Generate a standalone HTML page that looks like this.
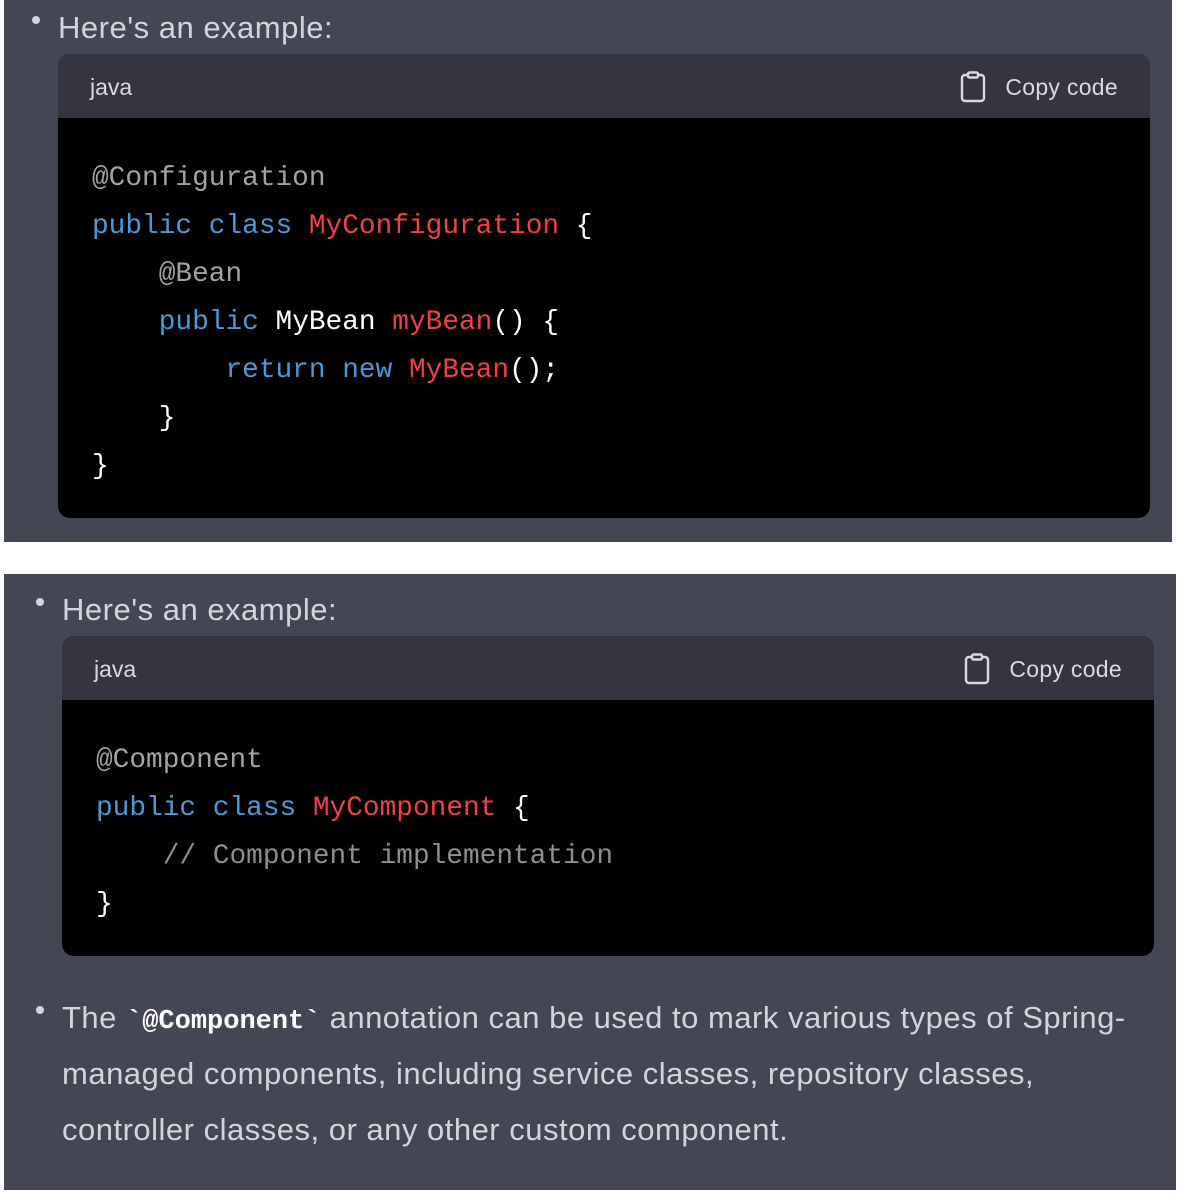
<!DOCTYPE html>
<html><head><meta charset="utf-8"><style>
*{margin:0;padding:0;box-sizing:border-box}
body{width:1188px;height:1200px;background:#fff;position:relative;overflow:hidden;font-family:"Liberation Sans",sans-serif;color:#d1d5db}
.panel{position:absolute;background:#444654}
.t{position:absolute;font-size:31px;letter-spacing:0.5px;white-space:nowrap;line-height:56px}
.dot{position:absolute;width:8px;height:8px;border-radius:50%;background:#d1d5db}
.cb{position:absolute;border-radius:12px;overflow:hidden;background:#000}
.hd{height:64px;background:#343541;position:relative;font-size:23px;color:#d9d9e3}
.hd .l{position:absolute;left:32px;top:20px}
.hd .cp{position:absolute;right:32px;top:20px;letter-spacing:0.3px}
.hd svg{position:absolute;right:164px;top:17px}
.code{font-family:"Liberation Mono",monospace;font-size:27.8px;line-height:48px;white-space:pre;color:#fff;padding:37px 0 0 34px}
.g{color:#a3a3a3}.b{color:#4b9ad8}.r{color:#ef4146}.c{color:#8e8e8e}
</style></head><body>
<div class="panel" style="left:4px;top:0;width:1168px;height:542px">
 <div class="dot" style="left:28px;top:16px"></div>
 <div class="t" style="left:54px;top:0px">Here's an example:</div>
 <div class="cb" style="left:54px;top:54px;width:1092px;height:464px">
  <div class="hd"><span class="l">java</span>
  <svg width="26" height="32" viewBox="0 0 26 32" fill="none" stroke="#d9d9e3" stroke-width="2.4" stroke-linejoin="round"><rect x="2" y="4" width="22" height="26" rx="3"/><rect x="8" y="1.5" width="10" height="5" rx="1.5" fill="#343541"/></svg>
  <span class="cp">Copy code</span></div>
  <div class="code"><span class="g">@Configuration</span>
<span class="b">public</span> <span class="b">class</span> <span class="r">MyConfiguration</span> {
    <span class="g">@Bean</span>
    <span class="b">public</span> MyBean <span class="r">myBean</span>() {
        <span class="b">return</span> <span class="b">new</span> <span class="r">MyBean</span>();
    }
}</div>
 </div>
</div>
<div class="panel" style="left:4px;top:574px;width:1172px;height:616px">
 <div class="dot" style="left:32px;top:24px"></div>
 <div class="t" style="left:58px;top:8px">Here's an example:</div>
 <div class="cb" style="left:58px;top:62px;width:1092px;height:320px">
  <div class="hd"><span class="l">java</span>
  <svg width="26" height="32" viewBox="0 0 26 32" fill="none" stroke="#d9d9e3" stroke-width="2.4" stroke-linejoin="round"><rect x="2" y="4" width="22" height="26" rx="3"/><rect x="8" y="1.5" width="10" height="5" rx="1.5" fill="#343541"/></svg>
  <span class="cp">Copy code</span></div>
  <div class="code"><span class="g">@Component</span>
<span class="b">public</span> <span class="b">class</span> <span class="r">MyComponent</span> {
    <span class="c">// Component implementation</span>
}</div>
 </div>
 <div class="dot" style="left:32px;top:432px"></div>
 <div class="t" style="left:58px;top:416px">The <b style="font-family:'Liberation Mono',monospace;font-size:27px;letter-spacing:0;color:#fff">`@Component`</b> annotation can be used to mark various types of Spring-</div>
 <div class="t" style="left:58px;top:472px">managed components, including service classes, repository classes,</div>
 <div class="t" style="left:58px;top:528px">controller classes, or any other custom component.</div>
</div>
</body></html>
